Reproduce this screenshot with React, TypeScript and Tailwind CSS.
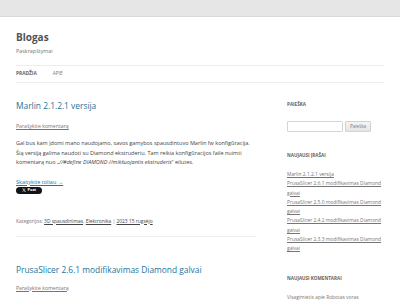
import React from "react";

export default function App() {
  const recent = [
    "Marlin 2.1.2.1 versija",
    "PrusaSlicer 2.6.1 modifikavimas Diamond galvai",
    "PrusaSlicer 2.5.0 modifikavimas Diamond galvai",
    "PrusaSlicer 2.4.2 modifikavimas Diamond galvai",
    "PrusaSlicer 2.3.3 modifikavimas Diamond galvai",
  ];
  return (
    <div
      className="w-[400px] h-[300px] overflow-hidden bg-white text-[#444]"
      style={{ fontFamily: '"Open Sans", "Noto Sans", sans-serif' }}
    >
      <div className="h-[17px] bg-[#e6e6e6] border-b border-[#dadada]" />
      <div className="px-4">
        <header className="pt-[14px]">
          <h1 className="text-[10px] font-bold leading-[12px] text-[#515151]">Blogas</h1>
          <p className="mt-[4px] text-[5.4px] leading-[8px] text-[#757575]">Paskrapštymai</p>
          <nav className="mt-[10px] h-[18px] border-y border-[#ededed] flex items-center gap-[16px] text-[4.8px] uppercase">
            <span className="font-bold text-[#636363]">Pradžia</span>
            <span className="text-[#757575]">Apie</span>
          </nav>
        </header>
        <div className="flex justify-between">
          <main className="w-[240px]">
            <article className="mt-[17px]">
              <h2 className="text-[8.4px] leading-[12px] text-[#21759b]">Marlin 2.1.2.1 versija</h2>
              <p className="mt-[10px] text-[5.2px] leading-[8px] text-[#757575] underline">Parašykite komentarą</p>
              <p className="mt-[9px] text-[5.5px] leading-[9.5px] text-[#444]">
                Gal bus kam įdomi mano naudojamo, savos gamybos spausdintuvo Marlin fw konfigūracija.
                <br />
                Šią versiją galima naudoti su Diamond ekstruderiu. Tam reikia konfigūracijos faile nuimti
                komentarą nuo „<em>//#define DIAMOND //mikšuojantis ekstruderis</em>“ eilutes.
              </p>
              <p className="mt-[10px] text-[5.5px] leading-[8px] text-[#21759b] underline">Skaitykite toliau →</p>
              <div className="mt-[1px] h-[7px] w-[26px] rounded-full bg-[#0f1419] flex items-center justify-center gap-[1.5px] text-white text-[4px] font-bold leading-none">
                <svg width="4" height="4" viewBox="0 0 24 24" fill="white">
                  <path d="M18.2 2.25h3.3l-7.2 8.26 8.5 11.24h-6.66l-5.21-6.82-5.97 6.82H1.66l7.73-8.84L1.25 2.25h6.83l4.71 6.23 5.41-6.23zm-1.16 17.52h1.83L7.08 4.13H5.12l11.92 15.64z" />
                </svg>
                <span>Post</span>
              </div>
              <p className="mt-[23px] text-[4.9px] leading-[8px] text-[#757575]">
                Kategorijos: <span className="underline text-[#444]">3D spausdinimas</span>,{" "}
                <span className="underline text-[#444]">Elektronika</span> |{" "}
                <span className="underline text-[#444]">2023 15 rugsėjo</span>
              </p>
              <div className="mt-[11px] border-t border-[#ededed]" />
            </article>
            <article className="mt-[27px]">
              <h2 className="text-[8.4px] leading-[12px] text-[#21759b]">PrusaSlicer 2.6.1 modifikavimas Diamond galvai</h2>
              <p className="mt-[8px] text-[5.2px] leading-[8px] text-[#757575] underline">Parašykite komentarą</p>
            </article>
          </main>
          <aside className="w-[97px]">
            <h3 className="mt-[18px] text-[4.6px] leading-[6px] font-bold uppercase text-[#636363]">Paieška</h3>
            <div className="mt-[14px] flex items-center gap-[2px]">
              <div className="h-[11px] w-[56px] border border-[#d5d5d5] rounded-[1px] bg-white" />
              <div className="h-[11px] w-[26px] border border-[#d2d2d2] rounded-[1px] bg-gradient-to-b from-[#f4f4f4] to-[#e6e6e6] flex items-center justify-center text-[4.6px] text-[#7c7c7c]">
                Paieška
              </div>
            </div>
            <h3 className="mt-[20px] text-[4.6px] leading-[6px] font-bold uppercase text-[#636363]">Naujausi įrašai</h3>
            <ul className="mt-[12px] text-[4.9px] leading-[9.3px] text-[#757575]">
              {recent.map((r) => (
                <li key={r} className="underline">{r}</li>
              ))}
            </ul>
            <h3 className="mt-[21px] text-[4.6px] leading-[6px] font-bold uppercase text-[#636363]">Naujausi komentarai</h3>
            <p className="mt-[12px] text-[4.9px] leading-[9.3px] text-[#757575]">
              Visagimietis apie <span className="text-[#757575]">Robotas voras</span>
            </p>
          </aside>
        </div>
      </div>
    </div>
  );
}
